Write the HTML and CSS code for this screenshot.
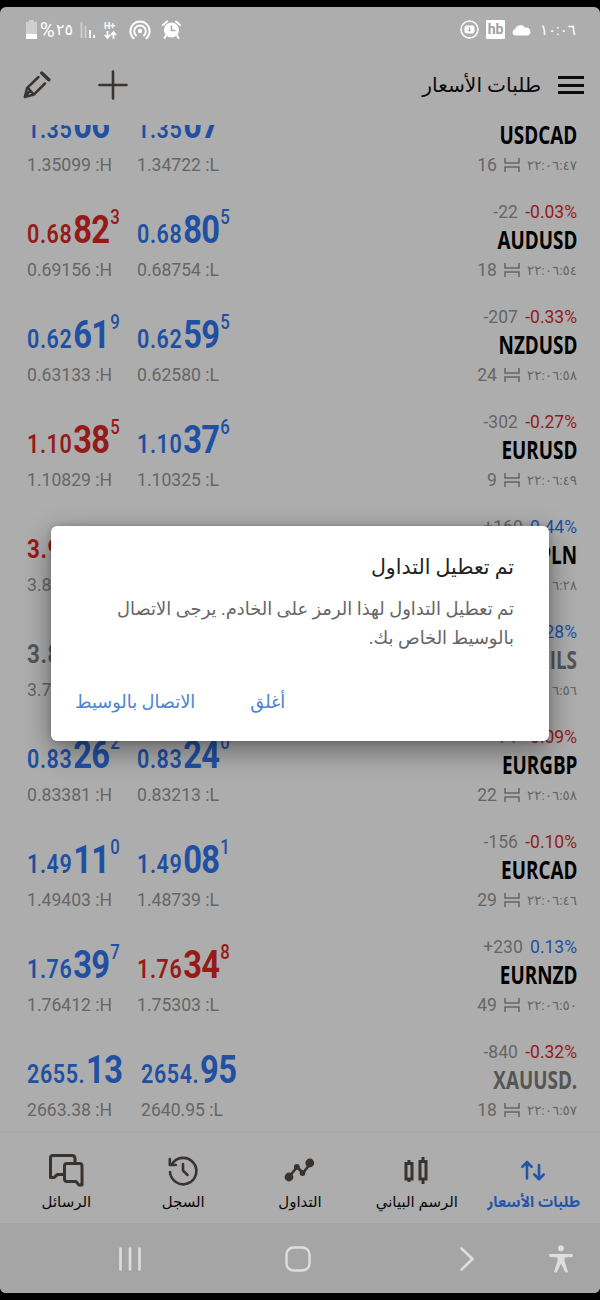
FILE: index.html
```html
<!DOCTYPE html>
<html lang="ar" dir="rtl">
<head>
    <meta charset="UTF-8">
    <meta name="viewport" content="width=device-width, initial-scale=1.0">
    <title>طلبات الأسعار</title>
    <link rel="stylesheet" href="styles.css">
</head>
<body>
    <div class="screen">
        <div class="status">
            <div class="status-left">
                <svg class="battery" width="13" height="19" viewBox="0 0 13 19"><path d="M4 0h5v2h3v17H1V2h3z" fill="#cfcfcf"/><path d="M1 14h11v5H1z" fill="#fff"/></svg>
                <span class="percent">%</span>
                <span class="charge">٢٥</span>
                <svg class="signal" width="16" height="18" viewBox="0 0 16 18"><path d="M1.5 1v16M5.5 5v12" stroke="#cfcfcf" stroke-width="1.800"/><path d="M10 9v8M14.200 14v3" stroke="#fff" stroke-width="1.800"/></svg>
                <div class="network">
                    <span>H+</span>
                    <svg width="13" height="8" viewBox="0 0 13 8" fill="none" stroke="#fff" stroke-width="1.800"><path d="M3.500 0v6.500M.8 4l2.700 2.800L6.200 4M9.500 8V1.500M6.800 4l2.700-2.800L12.200 4"/></svg>
                </div>
                <svg class="hotspot" width="22" height="20" viewBox="0 0 22 20" fill="none" stroke="#fff" stroke-width="2"><circle cx="11" cy="11" r="2.200" fill="#fff" stroke="none"/><path d="M7.700 16A5.800 5.800 0 1 1 14.300 16M5.200 18.800A9.600 9.600 0 1 1 16.800 18.800"/></svg>
                <svg class="alarm" width="19" height="19" viewBox="0 0 19 19"><circle cx="9.500" cy="10" r="7.600" fill="#fff"/><path d="M1 5l4-3.500M18 5l-4-3.500M4 15.500L2.500 18M15 15.500l1.500 2.500" stroke="#fff" stroke-width="2" stroke-linecap="round"/><path d="M9.500 5.500v5h4" fill="none" stroke="#adadad" stroke-width="1.700"/></svg>
            </div>
            <div class="status-right">
                <svg width="19" height="19" viewBox="0 0 19 19"><circle cx="9.500" cy="9.500" r="8.500" fill="none" stroke="#fff" stroke-width="1.500"/><rect x="4.500" y="5.500" width="10" height="8" rx="2" fill="#fff"/><path d="M9.500 7v4M8 9.700l1.500 1.600L11 9.700" fill="none" stroke="#adadad"/></svg>
                <span class="hb">hb</span>
                <svg width="19" height="12" viewBox="0 0 19 12"><path d="M3.500 11.500a3.300 3.300 0 0 1-.3-6.500A5.500 5.500 0 0 1 13.200 3.800a4 4 0 0 1 2.300 7.700z" fill="#fff"/></svg>
                <span class="clock">١٠:٠٦</span>
            </div>
        </div>

        <div class="header">
            <div class="tools">
                <svg width="28" height="28" viewBox="0 0 28 28" fill="none" stroke="#393430" stroke-width="2.500" stroke-linecap="round" stroke-linejoin="round"><path d="M18.800 2l7 6.800" stroke-width="3.400"/><path d="M15.500 6L4 17.200 1.800 26l9-2.400L22 12.500M5 17l5.800 6.500M2 25.500l5-5.500"/></svg>
                <svg width="30" height="30" viewBox="0 0 30 30" stroke="#393430" stroke-width="2.600" stroke-linecap="round"><path d="M15 1.500v27M1.500 15h27"/></svg>
            </div>
            <div class="heading">
                <h1>طلبات الأسعار</h1>
                <div class="menu"><i></i><i></i><i></i></div>
            </div>
        </div>

        <div class="quotes">
            <div class="quote">
                <div class="col bid"><div class="price blue">1.35<b>06</b></div><div class="limit">1.35099 :H</div></div>
                <div class="col ask"><div class="price blue">1.35<b>07</b></div><div class="limit">1.34722 :L</div></div>
                <div class="info">
                    <div class="change">&nbsp;</div>
                    <div class="symbol">USDCAD</div>
                    <div class="time">16 <svg class="spread" viewBox="0 0 16 16"><path d="M1 1v5h14V1M1 15v-5h14v5"/></svg> <span>٢٢:٠٦:٤٧</span></div>
                </div>
            </div>
            <div class="quote">
                <div class="col bid"><div class="price red">0.68<b>82</b><sup>3</sup></div><div class="limit">0.69156 :H</div></div>
                <div class="col ask"><div class="price blue">0.68<b>80</b><sup>5</sup></div><div class="limit">0.68754 :L</div></div>
                <div class="info">
                    <div class="change">-22 <span class="red">-0.03%</span></div>
                    <div class="symbol">AUDUSD</div>
                    <div class="time">18 <svg class="spread" viewBox="0 0 16 16"><path d="M1 1v5h14V1M1 15v-5h14v5"/></svg> <span>٢٢:٠٦:٥٤</span></div>
                </div>
            </div>
            <div class="quote">
                <div class="col bid"><div class="price blue">0.62<b>61</b><sup>9</sup></div><div class="limit">0.63133 :H</div></div>
                <div class="col ask"><div class="price blue">0.62<b>59</b><sup>5</sup></div><div class="limit">0.62580 :L</div></div>
                <div class="info">
                    <div class="change">-207 <span class="red">-0.33%</span></div>
                    <div class="symbol">NZDUSD</div>
                    <div class="time">24 <svg class="spread" viewBox="0 0 16 16"><path d="M1 1v5h14V1M1 15v-5h14v5"/></svg> <span>٢٢:٠٦:٥٨</span></div>
                </div>
            </div>
            <div class="quote">
                <div class="col bid"><div class="price red">1.10<b>38</b><sup>5</sup></div><div class="limit">1.10829 :H</div></div>
                <div class="col ask"><div class="price blue">1.10<b>37</b><sup>6</sup></div><div class="limit">1.10325 :L</div></div>
                <div class="info">
                    <div class="change">-302 <span class="red">-0.27%</span></div>
                    <div class="symbol">EURUSD</div>
                    <div class="time">9 <svg class="spread" viewBox="0 0 16 16"><path d="M1 1v5h14V1M1 15v-5h14v5"/></svg> <span>٢٢:٠٦:٤٩</span></div>
                </div>
            </div>
            <div class="quote">
                <div class="col bid"><div class="price strong red">3.9</div><div class="limit">3.8</div></div>
                <div class="info">
                    <div class="change">+160 <span class="blue">0.44%</span></div>
                    <div class="symbol">PLN</div>
                    <div class="time"><span>٦:٢٨</span></div>
                </div>
            </div>
            <div class="quote">
                <div class="col bid"><div class="price strong grey">3.8</div><div class="limit">3.7</div></div>
                <div class="info">
                    <div class="change"><span class="blue">0.28%</span></div>
                    <div class="symbol grey">ILS</div>
                    <div class="time"><span>٦:٥٦</span></div>
                </div>
            </div>
            <div class="quote">
                <div class="col bid"><div class="price blue">0.83<b>26</b><sup>2</sup></div><div class="limit">0.83381 :H</div></div>
                <div class="col ask"><div class="price blue">0.83<b>24</b><sup>0</sup></div><div class="limit">0.83213 :L</div></div>
                <div class="info">
                    <div class="change">-71 <span class="red">-0.09%</span></div>
                    <div class="symbol">EURGBP</div>
                    <div class="time">22 <svg class="spread" viewBox="0 0 16 16"><path d="M1 1v5h14V1M1 15v-5h14v5"/></svg> <span>٢٢:٠٦:٥٨</span></div>
                </div>
            </div>
            <div class="quote">
                <div class="col bid"><div class="price blue">1.49<b>11</b><sup>0</sup></div><div class="limit">1.49403 :H</div></div>
                <div class="col ask"><div class="price blue">1.49<b>08</b><sup>1</sup></div><div class="limit">1.48739 :L</div></div>
                <div class="info">
                    <div class="change">-156 <span class="red">-0.10%</span></div>
                    <div class="symbol">EURCAD</div>
                    <div class="time">29 <svg class="spread" viewBox="0 0 16 16"><path d="M1 1v5h14V1M1 15v-5h14v5"/></svg> <span>٢٢:٠٦:٤٦</span></div>
                </div>
            </div>
            <div class="quote">
                <div class="col bid"><div class="price blue">1.76<b>39</b><sup>7</sup></div><div class="limit">1.76412 :H</div></div>
                <div class="col ask"><div class="price red">1.76<b>34</b><sup>8</sup></div><div class="limit">1.75303 :L</div></div>
                <div class="info">
                    <div class="change">+230 <span class="blue">0.13%</span></div>
                    <div class="symbol">EURNZD</div>
                    <div class="time">49 <svg class="spread" viewBox="0 0 16 16"><path d="M1 1v5h14V1M1 15v-5h14v5"/></svg> <span>٢٢:٠٦:٥٠</span></div>
                </div>
            </div>
            <div class="quote">
                <div class="col bid wide"><div class="price blue">2655.<b>13</b></div><div class="limit">2663.38 :H</div></div>
                <div class="col ask"><div class="price blue">2654.<b>95</b></div><div class="limit">2640.95 :L</div></div>
                <div class="info">
                    <div class="change">-840 <span class="red">-0.32%</span></div>
                    <div class="symbol grey">XAUUSD.</div>
                    <div class="time">18 <svg class="spread" viewBox="0 0 16 16"><path d="M1 1v5h14V1M1 15v-5h14v5"/></svg> <span>٢٢:٠٦:٥٧</span></div>
                </div>
            </div>
        </div>

        <div class="tabs">
            <div class="tab active">
                <svg width="36" height="36" viewBox="0 0 36 36" fill="none" stroke="#2456a8" stroke-width="2.600" stroke-linecap="round" stroke-linejoin="round"><path d="M11 26.500V10.500M6.300 14.800L11 10l4.700 4.800M23 13v14M18.300 22.500L23 27.300l4.700-4.800"/></svg>
                <span>طلبات الأسعار</span>
            </div>
            <div class="tab">
                <svg width="36" height="36" viewBox="0 0 36 36" fill="none" stroke="#393430" stroke-width="3"><path d="M7 11.500h6v15.500h-6zM10 8v3M10 27v3M21 9.500h6v17.500h-6zM24 5v4M24 26.500V32"/></svg>
                <span>الرسم البياني</span>
            </div>
            <div class="tab">
                <svg width="36" height="36" viewBox="0 0 36 36" fill="#393430" stroke="#393430" stroke-width="2.800" stroke-linejoin="round"><path d="M7 25l8-10 6 6 7-9" fill="none"/><circle cx="7" cy="25" r="3"/><circle cx="14.800" cy="14.800" r="1.500"/><circle cx="20.500" cy="21" r="1.500"/><circle cx="27.800" cy="11" r="3"/></svg>
                <span>التداول</span>
            </div>
            <div class="tab">
                <svg width="36" height="36" viewBox="0 0 36 36" fill="none" stroke="#393430" stroke-width="2.600" stroke-linecap="round" stroke-linejoin="round"><path d="M5 20A13.200 13.200 0 1 0 7 12M4.800 7v6h6M18 12v6.500l4.500 4.500"/></svg>
                <span>السجل</span>
            </div>
            <div class="tab">
                <svg width="36" height="36" viewBox="0 0 36 36" fill="none" stroke="#393430" stroke-width="3" stroke-linecap="round" stroke-linejoin="round"><path d="M15 22.500H9.500L6 25.500H2.500V6Q2.500 3.500 5 3.500h19q3 0 3 3v5M19 11.500h12.500q2.500 0 2.500 2.500v19H31l-3-3.500h-9q-2.500 0-2.500-2.500V14q0-2.500 2.500-2.500z"/></svg>
                <span>الرسائل</span>
            </div>
        </div>

        <div class="sysbar">
            <svg class="recents" width="24" height="26" viewBox="0 0 24 26" stroke="#dedede" stroke-width="2.600" stroke-linecap="round"><path d="M2.500 2.500v21M12 2.500v21M21.500 2.500v21"/></svg>
            <svg class="home" width="26" height="26" viewBox="0 0 26 26" fill="none" stroke="#dedede" stroke-width="2.400"><rect x="1.500" y="1.500" width="23" height="23" rx="7"/></svg>
            <svg class="back" width="16" height="26" viewBox="0 0 16 26" fill="none" stroke="#dedede" stroke-width="2.600" stroke-linecap="round" stroke-linejoin="round"><path d="M2.500 2.500L13.500 13l-11 10.500"/></svg>
            <svg width="24" height="28" viewBox="0 0 24 28" fill="#dedede"><circle cx="12" cy="3.300" r="3"/><path d="M1.500 9h21a1.200 1.200 0 0 1 0 3L15.500 12.500V16l3.500 11q-2 1-3 0L12 18.500 8 27q-1 1-3 0l3.500-11v-3.500L1.500 12a1.200 1.200 0 0 1 0-3z"/></svg>
        </div>

        <div class="dialog">
            <h2>تم تعطيل التداول</h2>
            <p>تم تعطيل التداول لهذا الرمز على الخادم. يرجى الاتصال<br>بالوسيط الخاص بك.</p>
            <div class="actions">
                <a class="close">أغلق</a>
                <a class="contact">الاتصال بالوسيط</a>
            </div>
        </div>
    </div>
</body>
</html>
```
FILE: styles.css
```css
body {
    margin: 0;
    padding: 7px 0;
    background-color: #000;
    font-family: Roboto, "DejaVu Sans", sans-serif;
}

svg {
    display: block;
    flex: none;
}

.screen {
    position: relative;
    display: flex;
    flex-direction: column;
    height: 1286px;
    border-radius: 6px;
    overflow: hidden;
    background-color: #adadad;
}

.red { color: #951b19; }
.blue { color: #2150a3; }
.grey { color: #555; }

/* status bar */
.status {
    display: flex;
    direction: ltr;
    justify-content: space-between;
    align-items: center;
    height: 45px;
    padding: 0 26px 0 25px;
    color: #fff;
}

.status-left, .status-right {
    display: flex;
    align-items: center;
}

.status-right { gap: 7px; }

.percent {
    width: 16px;
    margin-left: 2px;
    font-size: 20px;
}

.charge {
    width: 17px;
    font-size: 16px;
    line-height: 18px;
}

.signal { margin-left: 7px; }

.network {
    margin-left: 8px;
    width: 13px;
    font-size: 9px;
    font-weight: 700;
    line-height: 10px;
}

.network span { display: block; }
.hotspot { margin-left: 12px; }
.alarm { margin-left: 11px; }

.hb {
    width: 19px;
    height: 19px;
    border-radius: 1px;
    background-color: #fff;
    color: #a0a0a0;
    font-size: 14px;
    font-weight: 700;
    line-height: 19px;
    text-align: center;
}

.clock {
    width: 34px;
    margin-left: 2px;
    font-size: 15px;
    text-align: right;
}

/* title bar */
.header {
    display: flex;
    direction: ltr;
    justify-content: space-between;
    align-items: center;
    height: 66px;
    padding: 0 16px 7px 23px;
}

.tools, .heading {
    display: flex;
    align-items: center;
}

.tools { gap: 47px; }
.heading { gap: 17px; }

h1 {
    margin: 0;
    font-size: 20.200px;
    font-weight: 400;
    direction: rtl;
    color: #0a0a0a;
}

.menu {
    display: flex;
    flex-direction: column;
    gap: 4.500px;
    width: 26px;
}

.menu i {
    height: 3px;
    background-color: #0a0a0a;
}

/* quotes */
.quotes {
    flex: 1;
    direction: ltr;
    overflow: hidden;
    border-bottom: 1px solid #a6a6a6;
}

.quote {
    display: flex;
    height: 105px;
    padding: 0 23px 0 27px;
}

.quote:first-child { margin-top: -35px; }

.bid { width: 110px; }
.wide { width: 114px; }

.price {
    height: 60px;
    line-height: 70px;
    font-size: 25px;
    font-weight: 600;
    letter-spacing: .7px;
    white-space: nowrap;
    transform: scaleX(.86);
    transform-origin: left;
}

.price b {
    margin-left: 1px;
    font-size: 38px;
    font-weight: 700;
    letter-spacing: -.8px;
}

.price sup {
    margin-left: 1px;
    font-size: 19.500px;
    font-weight: 500;
    line-height: 0;
    vertical-align: 19px;
}

.strong {
    font-size: 26px;
    font-weight: 700;
    line-height: 78px;
}

.limit {
    padding-top: 5px;
    font-size: 17.600px;
    line-height: 21px;
    color: #666;
    white-space: nowrap;
}

.info {
    flex: 1;
    text-align: right;
    color: #666;
}

.change {
    padding-top: 7px;
    font-size: 17.500px;
    line-height: 20px;
    word-spacing: 3px;
}

.symbol {
    height: 32px;
    font-family: "Open Sans", sans-serif;
    font-size: 25px;
    font-weight: 700;
    line-height: 34px;
    color: #000;
    transform: scaleX(.755);
    transform-origin: right;
}

.symbol.grey { color: #555; }

.time {
    display: flex;
    justify-content: flex-end;
    align-items: center;
    gap: 7px;
    padding-top: 5px;
    font-size: 17.500px;
    line-height: 22px;
}

.time span { font-size: 13.500px; }

.spread {
    width: 16px;
    height: 16px;
    fill: none;
    stroke: #666;
    stroke-width: 1.500;
}

/* bottom tabs */
.tabs {
    display: flex;
    height: 91px;
    padding: 0 8px;
}

.tab {
    display: flex;
    flex: 1;
    flex-direction: column;
    align-items: center;
    gap: 4px;
    padding-top: 20px;
    font-size: 15px;
    line-height: 20px;
    color: #0a0a0a;
    white-space: nowrap;
}

.active {
    color: #2456a8;
    font-family: Roboto, "Noto Sans Arabic", sans-serif;
    font-weight: 700;
}

.sysbar {
    display: flex;
    direction: ltr;
    align-items: center;
    height: 69px;
    padding: 1px 0 0 118px;
    background-color: #a5a5a5;
}

.recents { margin-right: 143px; }
.home { margin-right: 148px; }
.back { margin-right: 74px; }

/* dialog */
.dialog {
    position: absolute;
    top: 519px;
    left: 51px;
    width: 498px;
    height: 215px;
    box-sizing: border-box;
    padding: 26px 35px 0 24px;
    border-radius: 6px;
    background-color: #fff;
    box-shadow: 0 10px 28px rgba(0, 0, 0, .4), 0 0 6px rgba(0, 0, 0, .2);
}

h2 {
    margin: 0;
    font-size: 20.500px;
    font-weight: 400;
    line-height: 30px;
    color: #222;
}

p {
    margin: 12px 0 0;
    font-size: 17.900px;
    line-height: 29px;
    color: #666;
    white-space: nowrap;
}

.actions {
    display: flex;
    justify-content: flex-end;
    gap: 55px;
    margin-top: 35px;
    font-size: 17.800px;
    line-height: 30px;
    color: #4a84cf;
}
```
